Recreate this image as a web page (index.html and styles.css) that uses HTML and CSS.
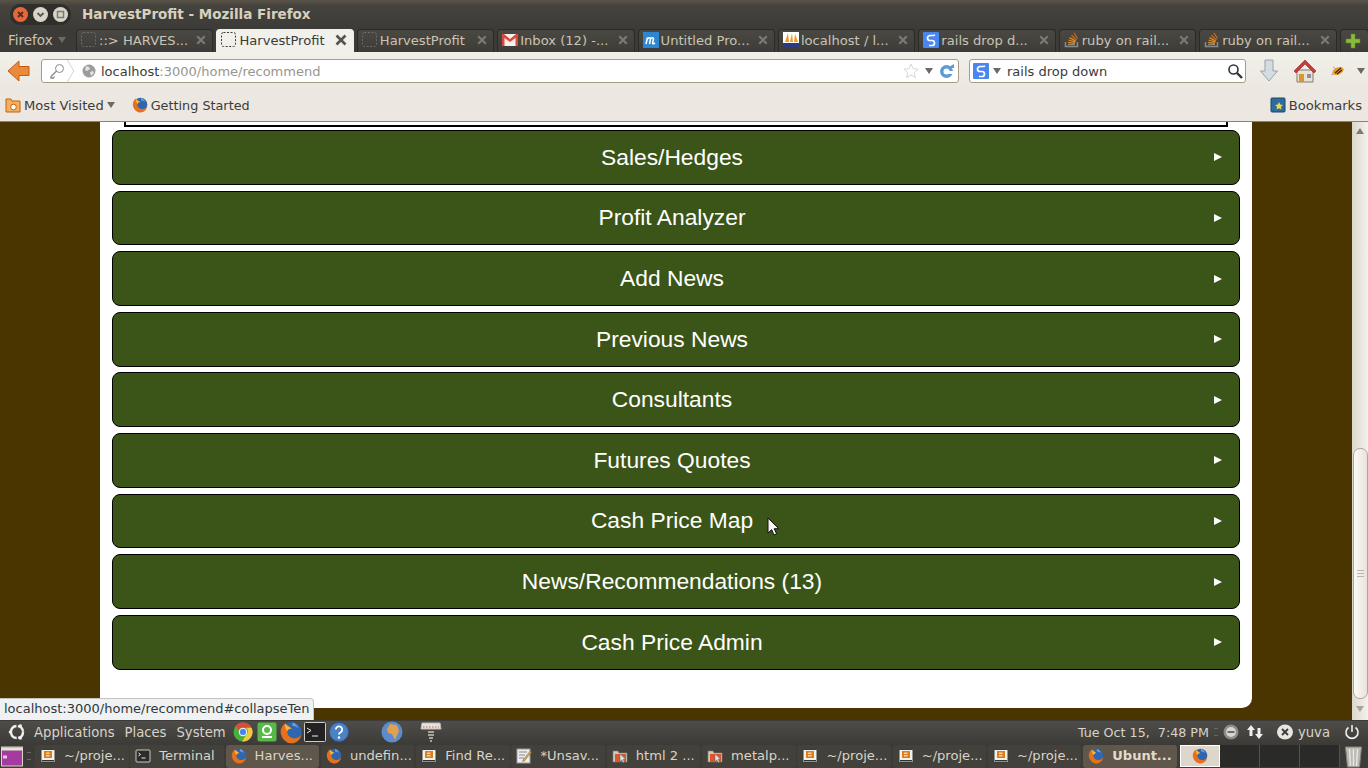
FILE: index.html
```html
<!DOCTYPE html>
<html lang="en">
<head>
    <meta charset="UTF-8">
    <title>HarvestProfit - Mozilla Firefox</title>
    <link rel="stylesheet" href="styles.css">
</head>
<body>

<svg class="defs" width="0" height="0">
    <symbol id="fx" viewBox="0 0 16 16">
        <circle cx="8.500" cy="7.500" r="6.800" fill="#2f66b0"/>
        <path d="M4 1.500C1 3.500.5 7 1 9c1 4 4 6.500 7.500 6.500s6.500-3 6.700-6.500c-.7 2-3.200 3.500-5.700 3-3-.5-4.500-3-4-5 .5-1.500 2-2 3-1.500C7 3.500 5 3.500 4 1.500z" fill="#e8701a"/>
        <path d="M4 1.500c1 2 3 2 4.500 4-1-.5-2.500 0-3 1.500C4 5.500 3.500 3.500 4 1.500z" fill="#f6b53a"/>
        <path d="M9 1c2 .5 3.500 2 4 4-1.500-1.500-3-1.500-4-1.500z" fill="#6fa0dc"/>
    </symbol>
    <symbol id="sublime" viewBox="0 0 16 16">
        <rect x="1" y="1.500" width="14" height="13" rx="1" fill="#f4f1ea" stroke="#3a3a36"/>
        <rect x="4" y="3" width="8" height="7" fill="#d8801e"/>
        <path d="M6 7.800h3.500M6 5.200h3.500" stroke="#fff" stroke-width="1"/>
        <rect x="2" y="12" width="12" height="1.500" fill="#333"/>
    </symbol>
    <symbol id="term" viewBox="0 0 16 16">
        <rect x="1" y="2" width="14" height="12" rx="1" fill="#2b2b2b" stroke="#cfcbc2"/>
        <path d="M3.500 5l2 1.500-2 1.500M6.500 10h4" stroke="#eee" fill="none"/>
    </symbol>
    <symbol id="folder" viewBox="0 0 16 16">
        <path d="M1 3h5l1 2h8v9H1z" fill="#cfc8b8" stroke="#8a8272" stroke-width=".6"/>
        <rect x="3" y="6" width="11" height="8" fill="#d9572b"/>
        <path d="M8 6l5.500 5-2.300.3 1.200 2.700-1.400.6-1.200-2.700L8 13.500z" fill="#d8e0e8" stroke="#555" stroke-width=".4"/>
    </symbol>
    <symbol id="blank" viewBox="0 0 16 16">
        <rect x=".5" y=".5" width="14" height="14" rx="2" fill="none" stroke="currentColor" stroke-dasharray="2 1.500"/>
    </symbol>
    <symbol id="google" viewBox="0 0 16 16">
        <rect width="16" height="16" rx="1" fill="#4a86f0"/>
        <path d="M10.500 3.500H7a2.500 2.500 0 0 0 0 5h2a2 2 0 0 1 0 5H6M10.500 3.500l1.500-.5" fill="none" stroke="#fff" stroke-width="1.700"/>
    </symbol>
    <symbol id="so" viewBox="0 0 16 16">
        <path d="M1.500 10v4.500h12V10" fill="none" stroke="#8c8a82" stroke-width="1.500"/>
        <path d="M4 12.500h7" stroke="#8c8a82" stroke-width="1.300"/>
        <path d="M4 10.300l7 1M4.500 8l6.800 2.200M5.500 5.600l6.300 3.500" stroke="#d88a24" stroke-width="1.300"/>
        <path d="M7.500 3.200l5 4.800M10 1l3.500 5.500" stroke="#d8641e" stroke-width="1.300"/>
    </symbol>
    <symbol id="close" viewBox="0 0 12 12">
        <path d="M1.500 1.500l9 9M10.500 1.500l-9 9" stroke="currentColor" stroke-width="2.600"/>
    </symbol>
    <symbol id="caret" viewBox="0 0 8 6">
        <path d="M0 0h8L4 6z" fill="currentColor"/>
    </symbol>
</svg>

<header class="titlebar">
    <div class="winbtns">
        <svg class="winbtn" viewBox="0 0 15 15"><circle cx="7.500" cy="7.500" r="7.500" fill="#e8663c"/><path d="M5 5l5 5M10 5l-5 5" stroke="#4a3028" stroke-width="1.800"/></svg>
        <svg class="winbtn" viewBox="0 0 15 15"><circle cx="7.500" cy="7.500" r="7.500" fill="#d8d4ca"/><path d="M4.500 6l3 3 3-3" fill="none" stroke="#5a5850" stroke-width="1.800"/></svg>
        <svg class="winbtn" viewBox="0 0 15 15"><circle cx="7.500" cy="7.500" r="7.500" fill="#d8d4ca"/><rect x="4.500" y="4.500" width="6" height="6" fill="none" stroke="#7c7a72" stroke-width="1.500"/></svg>
    </div>
    <span class="wintitle">HarvestProfit - Mozilla Firefox</span>
</header>

<div class="tabstrip">
    <span class="appmenu">Firefox <svg class="caret"><use href="#caret"/></svg></span>
    <div class="tab"><svg class="ico16 dim"><use href="#blank"/></svg><span class="tab-label">::&gt; HARVES...</span><svg class="tab-x"><use href="#close"/></svg></div>
    <div class="tab tab-active"><svg class="ico16"><use href="#blank"/></svg><span class="tab-label">HarvestProfit</span><svg class="tab-x"><use href="#close"/></svg></div>
    <div class="tab"><svg class="ico16 dim"><use href="#blank"/></svg><span class="tab-label">HarvestProfit</span><svg class="tab-x"><use href="#close"/></svg></div>
    <div class="tab">
        <svg class="ico16" viewBox="0 0 16 16"><rect y="2" width="16" height="12" fill="#f4f0ea"/><path d="M0 2v12h2.500V6L8 10l5.500-4v8H16V2h-2L8 7 2 2z" fill="#d94a3d"/></svg>
        <span class="tab-label">Inbox (12) -...</span><svg class="tab-x"><use href="#close"/></svg>
    </div>
    <div class="tab">
        <svg class="ico16" viewBox="0 0 16 16"><rect width="16" height="16" fill="#2d86d0"/><path d="M3 12l1.500-6.500M4.500 7c1-1.500 3-2 3 0l-1 5M7.500 7c1-1.500 3-2 3 0l-1 4c0 1 1 1 2.500 0" fill="none" stroke="#fff" stroke-width="1.600"/></svg>
        <span class="tab-label">Untitled Pro...</span><svg class="tab-x"><use href="#close"/></svg>
    </div>
    <div class="tab">
        <svg class="ico16" viewBox="0 0 16 16"><rect width="16" height="16" fill="#fff"/><path d="M2 10L5 1l1 9zM7 10l2-9 1 9zM11 10l1-8 3 8z" fill="#f29a1d"/><rect y="11" width="16" height="5" fill="#2c3a80"/></svg>
        <span class="tab-label">localhost / l...</span><svg class="tab-x"><use href="#close"/></svg>
    </div>
    <div class="tab"><svg class="ico16"><use href="#google"/></svg><span class="tab-label">rails drop d...</span><svg class="tab-x"><use href="#close"/></svg></div>
    <div class="tab"><svg class="ico16"><use href="#so"/></svg><span class="tab-label">ruby on rail...</span><svg class="tab-x"><use href="#close"/></svg></div>
    <div class="tab"><svg class="ico16"><use href="#so"/></svg><span class="tab-label">ruby on rail...</span><svg class="tab-x"><use href="#close"/></svg></div>
    <div class="tab tab-new">
        <svg class="ico16" viewBox="0 0 16 16"><path d="M6 1h4v5h5v4h-5v5H6v-5H1V6h5z" fill="#86bc3c" stroke="#5f8c24" stroke-width=".6"/></svg>
    </div>
</div>

<nav class="navbar">
    <svg class="back" viewBox="0 0 23 22"><path d="M1 11L12 1v5.500h10v9H12V21z" fill="#ec8a3c" stroke="#c25a14"/></svg>
    <div class="field urlbar">
        <svg class="ico16 key" viewBox="0 0 16 16"><circle cx="10.500" cy="5.500" r="4" fill="#fff" stroke="#8c8a84"/><path d="M7.500 8L2 13.500V15h2.500l1-1.500" fill="none" stroke="#8c8a84" stroke-width="1.300"/></svg>
        <svg class="chevron" viewBox="0 0 8 24"><path d="M0 0l7 12-7 12" fill="none" stroke="#d4d0c8"/></svg>
        <svg class="ico14" viewBox="0 0 14 14"><circle cx="7" cy="7" r="6.500" fill="#9c9c9c"/><path d="M4 2l3 1 1 2-3 2-2-1zM8 8l3-1 1 2-3 3z" fill="#e2e2e2"/></svg>
        <span class="url"><span class="url-host">localhost</span>:3000/home/recommend</span>
        <svg class="ico16 star" viewBox="0 0 16 16"><path d="M8 1l2.100 4.700 5 .5-3.800 3.300 1.100 5L8 11.900l-4.400 2.600 1.100-5L.9 6.200l5-.5z" fill="#fff" stroke="#d8d6d0"/></svg>
        <svg class="caret dark"><use href="#caret"/></svg>
        <svg class="ico16 reload" viewBox="0 0 16 16"><circle cx="7.500" cy="8.500" r="6.500" fill="#5d9bd8"/><circle cx="7.500" cy="8.500" r="3" fill="#fff"/><path d="M8 5h7V1z" fill="#5d9bd8"/><rect x="9" y="8" width="6" height="3" fill="#fff"/></svg>
    </div>
    <div class="field searchbar">
        <svg class="ico16"><use href="#google"/></svg>
        <svg class="caret dark"><use href="#caret"/></svg>
        <span class="search-text">rails drop down</span>
        <svg class="ico16 glass" viewBox="0 0 16 16"><circle cx="6.500" cy="6.500" r="4.500" fill="#fff" stroke="#333" stroke-width="1.600"/><path d="M10 10l5 5" stroke="#333" stroke-width="2.400"/></svg>
    </div>
    <svg class="tool-down" viewBox="0 0 18 24"><path d="M5 1h8v11h4.500L9 22 .5 12H5z" fill="#d4dce2" stroke="#9aa2a6"/></svg>
    <svg class="tool-home" viewBox="0 0 24 24"><path d="M4 11h16v12H4z" fill="#e8e2d6" stroke="#8a7a60"/><path d="M1 12L12 1l11 11-2 2-9-9-9 9z" fill="#c43c3c" stroke="#8e2626" stroke-width=".6"/><rect x="6" y="15" width="5" height="8" fill="#d8962c"/><rect x="14" y="15" width="4" height="4" fill="#8c9098"/></svg>
    <svg class="tool-bug" viewBox="0 0 16 14"><ellipse cx="8" cy="7" rx="6" ry="3.500" transform="rotate(-25 8 7)" fill="#e89a24"/><path d="M5 9l6-5M7 10l5-4" stroke="#3a2a16" stroke-width="1.200"/><path d="M1 11l4-2M3 3l3 2" stroke="#aaa69c"/></svg>
    <svg class="caret dark tool-caret"><use href="#caret"/></svg>
</nav>

<div class="bookmarks">
    <span class="bm">
        <svg class="ico16" viewBox="0 0 16 16"><path d="M1 2h5l1 2h8v11H1z" fill="#f0b060" stroke="#c8600c"/><circle cx="8.500" cy="10" r="2.800" fill="#fff" stroke="#c8600c"/></svg>
        Most Visited <svg class="caret dark"><use href="#caret"/></svg>
    </span>
    <span class="bm bm-start"><svg class="ico16"><use href="#fx"/></svg>Getting Started</span>
    <span class="bm bm-right">
        <svg class="ico16" viewBox="0 0 16 16"><rect x="1" y="1" width="14" height="14" rx="1" fill="#2e6c9c" stroke="#1c4468"/><path d="M9 5l1.200 2.600 2.800.3-2.100 1.900.6 2.800L9 11.200l-2.500 1.400.6-2.800L5 7.900l2.800-.3z" fill="#f6d648"/></svg>
        Bookmarks
    </span>
</div>

<div class="viewport">
    <main class="page">
        <div class="card">
            <div class="topbox"></div>
            <div class="accordion">
                <a class="acc-row"><span class="acc-title">Sales/Hedges</span><i class="acc-arrow"></i></a>
                <a class="acc-row"><span class="acc-title">Profit Analyzer</span><i class="acc-arrow"></i></a>
                <a class="acc-row"><span class="acc-title">Add News</span><i class="acc-arrow"></i></a>
                <a class="acc-row"><span class="acc-title">Previous News</span><i class="acc-arrow"></i></a>
                <a class="acc-row"><span class="acc-title">Consultants</span><i class="acc-arrow"></i></a>
                <a class="acc-row"><span class="acc-title">Futures Quotes</span><i class="acc-arrow"></i></a>
                <a class="acc-row"><span class="acc-title">Cash Price Map</span><i class="acc-arrow"></i></a>
                <a class="acc-row"><span class="acc-title">News/Recommendations (13)</span><i class="acc-arrow"></i></a>
                <a class="acc-row"><span class="acc-title">Cash Price Admin</span><i class="acc-arrow"></i></a>
            </div>
        </div>
    </main>
    <div class="scrollbar">
        <span class="sb-up"></span>
        <div class="sb-thumb"><span class="sb-grip"></span></div>
        <span class="sb-down"></span>
    </div>
    <div class="statuspanel">localhost:3000/home/recommend#collapseTen</div>
    <svg class="pointer" viewBox="0 0 12 19"><path d="M1 1v15l3.600-3.400L7 18l2.600-1.200-2.400-5.100h4.600z" fill="#f6f6f6" stroke="#111" stroke-width="1"/></svg>
</div>

<div class="gnome-top">
    <svg class="ubuntu" viewBox="0 0 18 18"><circle cx="9" cy="9" r="6" fill="none" stroke="#eee" stroke-width="2.400" stroke-dasharray="8 1.500"/><circle cx="2.500" cy="9" r="1.800" fill="#eee"/><circle cx="12.300" cy="3" r="1.800" fill="#eee"/><circle cx="12.300" cy="15" r="1.800" fill="#eee"/></svg>
    <span class="menu">Applications</span>
    <span class="menu">Places</span>
    <span class="menu">System</span>
    <div class="launchers">
        <svg class="launch" viewBox="0 0 20 20"><circle cx="10" cy="10" r="9.500" fill="#4caf3c"/><path d="M10 .5a9.500 9.500 0 0 1 8.500 5.300H10a4.200 4.200 0 0 0-4 3L2.500 4A9.500 9.500 0 0 1 10 .5z" fill="#dd4a3c"/><path d="M18.500 5.800A9.500 9.500 0 0 1 9 19.500l4.500-7a4.200 4.200 0 0 0-.5-6.700z" fill="#f6c83c"/><circle cx="10" cy="10" r="3.800" fill="#4a86e8" stroke="#fff"/></svg>
        <svg class="launch launch-cheese" viewBox="0 0 20 20"><rect x=".5" y=".5" width="19" height="19" rx="2" fill="#58b948"/><circle cx="10" cy="8" r="4" fill="none" stroke="#fff" stroke-width="2"/><path d="M5 15h10" stroke="#fff" stroke-width="2"/></svg>
        <svg class="launch launch-fox"><use href="#fx"/></svg>
        <svg class="launch launch-term" viewBox="0 0 22 20"><rect x=".5" y=".5" width="21" height="19" rx="1" fill="#222" stroke="#cfcbc2"/><path d="M3 6l4 2.500-4 2.500M8 14h6" stroke="#eee" fill="none"/></svg>
        <svg class="launch launch-help" viewBox="0 0 20 20"><circle cx="10" cy="10" r="9.500" fill="#4c82c4" stroke="#2d5c98"/><path d="M6.800 7.500a3.200 3.200 0 1 1 4.800 2.800c-1 .6-1.600 1-1.600 2.200" fill="none" stroke="#fff" stroke-width="1.800"/><circle cx="10" cy="15.500" r="1.200" fill="#fff"/></svg>
        <svg class="launch launch-globe" viewBox="0 0 22 22"><circle cx="11" cy="11" r="10.500" fill="#5c8ccc"/><path d="M9 3l7 1 2 6-4 9-3-6-4-1-1-4z" fill="#e0a050"/></svg>
        <svg class="launch launch-net" viewBox="0 0 22 22"><path d="M2 2h18l1 6H1z" fill="#e8e4dc" stroke="#bbb"/><path d="M3 6h16" stroke="#c85a4a" stroke-dasharray="1.500 1.500"/><path d="M8 11h6M8 14h6M9 17h4M10 20h2" stroke="#c8c4ba" stroke-width="1.300"/></svg>
    </div>
    <div class="tray">
        <span class="clock">Tue Oct 15,&nbsp; 7:48 PM</span>
        <span class="handle"></span>
        <svg class="tray-ico tray-busy" viewBox="0 0 16 16"><circle cx="8" cy="8" r="7.500" fill="#8e8c86"/><circle cx="8" cy="8" r="5" fill="#d8d6d0"/><rect x="4.500" y="7" width="7" height="2" fill="#6c6a64"/></svg>
        <svg class="tray-ico tray-net" viewBox="0 0 18 16"><path d="M5 1l4 5H6.500v6h-3V6H1zM13 15l4-5h-2.500V4h-3v6H9z" fill="#eee"/></svg>
        <svg class="tray-ico tray-user" viewBox="0 0 18 16"><ellipse cx="9" cy="8" rx="8" ry="7.500" fill="#e8e6e0"/><path d="M6 5l6 6M12 5l-6 6" stroke="#3c3b37" stroke-width="1.800"/></svg>
        <span class="username">yuva</span>
        <svg class="tray-ico tray-power" viewBox="0 0 16 16"><path d="M4.500 3.500a6 6 0 1 0 7 0" fill="none" stroke="#eee" stroke-width="1.600"/><path d="M8 1v7" stroke="#eee" stroke-width="1.600"/></svg>
    </div>
</div>

<div class="gnome-bottom">
    <svg class="desk" viewBox="0 0 22 20"><rect x=".5" y=".5" width="21" height="19" fill="#a53ba0" stroke="#d8d4ca"/><rect x="1" y="1" width="20" height="3" fill="#e8e4d8"/><rect x="2" y="9" width="4" height="3" fill="#e8c8e8"/></svg>
    <span class="handle handle-win"></span>
    <div class="winlist">
        <div class="win"><svg class="ico16"><use href="#sublime"/></svg>~/proje...</div>
        <div class="win"><svg class="ico16"><use href="#term"/></svg>Terminal</div>
        <div class="win win-on"><svg class="ico16"><use href="#fx"/></svg>Harves...</div>
        <div class="win"><svg class="ico16"><use href="#fx"/></svg>undefin...</div>
        <div class="win"><svg class="ico16"><use href="#sublime"/></svg>Find Re...</div>
        <div class="win">
            <svg class="ico16" viewBox="0 0 16 16"><rect x="1" y="1" width="13" height="14" fill="#eee" stroke="#999"/><path d="M3 4h8M3 7h6M3 10h5" stroke="#888"/><path d="M7 12l7-9 1.500 1-7 9-2 .5z" fill="#d8a848" stroke="#555" stroke-width=".4"/></svg>
            *Unsav...
        </div>
        <div class="win"><svg class="ico16"><use href="#folder"/></svg>html 2 ...</div>
        <div class="win"><svg class="ico16"><use href="#folder"/></svg>metalp...</div>
        <div class="win"><svg class="ico16"><use href="#sublime"/></svg>~/proje...</div>
        <div class="win"><svg class="ico16"><use href="#sublime"/></svg>~/proje...</div>
        <div class="win"><svg class="ico16"><use href="#sublime"/></svg>~/proje...</div>
        <div class="win win-on win-bold"><svg class="ico16"><use href="#fx"/></svg>Ubunt...</div>
    </div>
    <div class="pager">
        <div class="ws ws-on"><svg class="ico16"><use href="#fx"/></svg></div>
        <div class="ws"></div>
        <div class="ws"></div>
        <div class="ws"></div>
    </div>
    <svg class="trash" viewBox="0 0 20 24"><path d="M2 3h16l-2 20H4z" fill="#bcbab4" stroke="#85837d"/><path d="M6 5l1 17M10 5v17M14 5l-1 17" stroke="#e8e6e0" stroke-width="1.400"/></svg>
</div>

</body>
</html>
```

FILE: styles.css
```css
* {
    box-sizing: border-box;
}
html, body {
    margin: 0;
    height: 768px;
    overflow: hidden;
}
body {
    display: flex;
    flex-direction: column;
    font-family: "DejaVu Sans", sans-serif;
    font-size: 13px;
    background: #3c3b37;
}
svg {
    display: block;
    flex: none;
}
.defs {
    position: absolute;
}
.ico16 {
    width: 16px;
    height: 16px;
}
.ico14 {
    width: 14px;
    height: 14px;
}
.caret {
    display: inline-block;
    width: 8px;
    height: 6px;
    color: #6d6a62;
}
.caret.dark {
    color: #6b6a64;
}

/* window title */
.titlebar {
    height: 29px;
    flex: none;
    display: flex;
    align-items: center;
    padding: 0 0 1px 10px;
    background: linear-gradient(#5a5448, #45433d 20%, #3c3b37);
}
.winbtns {
    display: flex;
    gap: 5px;
    align-items: center;
    padding: 3px 3px;
    background: #2f2e2b;
    border-radius: 10px;
}
.winbtn {
    width: 15px;
    height: 15px;
}
.wintitle {
    margin-left: 11px;
    font-weight: bold;
    font-size: 13.500px;
    color: #d8d0bf;
}

/* tabs */
.tabstrip {
    height: 23px;
    flex: none;
    display: flex;
    align-items: flex-end;
    gap: 3px;
    background: #3c3b37;
}
.appmenu {
    flex: none;
    width: 73px;
    padding: 0 0 2px 8px;
    height: 23px;
    display: flex;
    align-items: center;
    gap: 5px;
    font-size: 13.500px;
    color: #c9c4b6;
}
.tab {
    flex: none;
    width: 137.400px;
    height: 23px;
    display: flex;
    align-items: center;
    padding: 0 6px 2px 4px;
    gap: 2px;
    background: linear-gradient(#4a4843, #3d3c38);
    border: 1px solid #2b2a27;
    border-bottom: none;
    border-radius: 4px 4px 0 0;
    font-size: 13.100px;
    color: #c9c4b6;
    white-space: nowrap;
}
.tab-active {
    background: #f2f0ea;
    color: #3c3b37;
    border-color: #f2f0ea;
}
.tab-label {
    flex: 1;
    min-width: 0;
}
.tab-x {
    width: 10px;
    height: 10px;
    color: #7b7a74;
}
.tab-active .tab-x {
    width: 12px;
    height: 12px;
    color: #55534e;
}
.dim {
    color: #6e6c66;
}
.tab-new {
    width: 29px;
    padding: 0 4px;
}

/* navigation */
.navbar {
    height: 36px;
    flex: none;
    display: flex;
    align-items: center;
    padding: 2px 0 0 7px;
    background: linear-gradient(#f2f0ea, #ece8e1);
    color: #3c3b37;
}
.back {
    width: 23px;
    height: 22px;
}
.field {
    flex: none;
    height: 24px;
    display: flex;
    align-items: center;
    background: #fff;
    border: 1px solid #a89c84;
    border-radius: 3px;
}
.urlbar {
    width: 918px;
    margin-left: 11px;
    padding-left: 7px;
}
.chevron {
    width: 8px;
    height: 22px;
    margin: 0 7px 0 2px;
}
.url {
    flex: 1;
    margin-left: 5px;
    color: #97958f;
}
.url-host {
    color: #3c3b37;
}
.star {
    margin-right: 6px;
}
.reload {
    margin: 0 3px 0 6px;
}
.searchbar {
    width: 277px;
    margin-left: 10px;
    padding: 0 2px 0 3px;
}
.search-text {
    flex: 1;
    margin-left: 6px;
}
.searchbar .caret {
    margin-left: 4px;
}
.tool-down {
    width: 18px;
    height: 24px;
    margin-left: 14px;
}
.tool-home {
    width: 24px;
    height: 24px;
    margin-left: 15px;
}
.tool-bug {
    width: 16px;
    height: 14px;
    margin-left: 13px;
}
.tool-caret {
    margin-left: 11px;
}

/* bookmarks */
.bookmarks {
    height: 34px;
    flex: none;
    display: flex;
    align-items: center;
    padding: 1px 6px 0 5px;
    gap: 18px;
    background: #ece8e1;
    border-bottom: 1px solid #8a8272;
    font-size: 13.100px;
    color: #3c3b37;
}
.bm {
    display: flex;
    align-items: center;
    gap: 3px;
}
.bm-start {
    margin-left: -1px;
    font-size: 12.800px;
}
.bm-right {
    margin-left: auto;
}

/* page content */
.viewport {
    position: relative;
    height: 598px;
    flex: none;
    display: flex;
    background: #4a3500;
}
.page {
    flex: 1;
    padding-left: 100px;
}
.card {
    width: 1152px;
    height: 586px;
    padding: 0 12px;
    background: #fff;
    border-radius: 0 0 10px 10px;
}
.topbox {
    height: 5px;
    margin: 0 12px 3px;
    border: 2px solid #000;
    border-top: none;
}
.accordion {
    display: flex;
    flex-direction: column;
    gap: 5.800px;
}
.acc-row {
    height: 54.800px;
    display: flex;
    align-items: center;
    padding: 0 17px;
    background: #3b5518;
    border: 1px solid #000;
    border-radius: 8px;
    color: #fff;
    font-family: "Liberation Sans", Arial, sans-serif;
    font-size: 22.800px;
}
.acc-title {
    flex: 1;
    text-align: center;
}
.acc-arrow {
    width: 0;
    height: 0;
    border-left: 8px solid #fff;
    border-top: 4px solid transparent;
    border-bottom: 4px solid transparent;
}

/* scrollbar */
.scrollbar {
    width: 16px;
    flex: none;
    display: flex;
    flex-direction: column;
    align-items: center;
    padding-top: 6px;
    background: linear-gradient(90deg, #dcd6cc, #f4f2ee);
}
.sb-up,
.sb-down {
    width: 0;
    height: 0;
    border-left: 4px solid transparent;
    border-right: 4px solid transparent;
}
.sb-up {
    border-bottom: 6px solid #807c72;
}
.sb-down {
    margin-top: 7px;
    border-top: 6px solid #a8a498;
}
.sb-thumb {
    width: 15px;
    height: 251px;
    margin-top: 314px;
    display: flex;
    align-items: center;
    justify-content: center;
    background: linear-gradient(90deg, #fbfaf8, #e8e3da);
    border: 1px solid #b0a690;
    border-radius: 7px;
}
.sb-grip {
    width: 7px;
    height: 7px;
    border-top: 1px solid #bdb6a6;
    border-bottom: 1px solid #bdb6a6;
    background: linear-gradient(transparent 45%, #bdb6a6 45%, #bdb6a6 65%, transparent 65%);
}

/* things over the page */
.statuspanel {
    position: absolute;
    left: 0;
    bottom: 0;
    height: 22px;
    width: 314px;
    padding: 2px 0 0 4px;
    background: #eff1f2;
    border: 1px solid #c4c4c0;
    border-left: none;
    border-bottom: none;
    border-radius: 0 4px 0 0;
    font-size: 13px;
    color: #30383c;
    white-space: nowrap;
}
.pointer {
    position: absolute;
    left: 767px;
    top: 395px;
    width: 12px;
    height: 19px;
}

/* gnome panels */
.gnome-top {
    height: 24px;
    flex: none;
    display: flex;
    align-items: center;
    padding: 0 0 1px 8px;
    background: linear-gradient(#4e4d49, #3c3b37);
    font-size: 13.200px;
    color: #d8d4c8;
    border-top: 1px solid #3c3b37;
}
.ubuntu {
    width: 18px;
    height: 18px;
    margin-right: 8px;
}
.menu {
    margin-right: 10px;
}
.launchers {
    display: flex;
    align-items: center;
    margin-left: -3px;
}
.launch {
    width: 20px;
    height: 20px;
}
.launch-cheese {
    margin-left: 4px;
}
.launch-fox {
    width: 24px;
    height: 23px;
    margin-left: 2px;
}
.launch-term {
    width: 22px;
    margin-left: 1px;
}
.launch-help {
    margin-left: 3px;
}
.launch-globe {
    width: 22px;
    height: 22px;
    margin-left: 32px;
}
.launch-net {
    width: 24px;
    height: 22px;
    margin-left: 16px;
}
.tray {
    margin-left: auto;
    display: flex;
    align-items: center;
}
.clock {
    margin-right: 5px;
    font-size: 12.700px;
}
.handle {
    width: 4px;
    height: 8px;
    border-top: 1px solid #6a6964;
    border-bottom: 1px solid #6a6964;
    margin-right: 5px;
}
.tray-ico {
    width: 16px;
    height: 16px;
    margin-right: 8px;
}
.tray-busy {
    margin-right: 7px;
}
.tray-net {
    width: 18px;
    margin-right: 12px;
}
.tray-user {
    width: 18px;
    margin-right: 4px;
}
.username {
    margin-right: 14px;
}
.gnome-bottom {
    height: 24px;
    flex: none;
    display: flex;
    align-items: center;
    background: #3c3b37;
    color: #d8d4c8;
}
.desk {
    width: 22px;
    height: 21px;
    margin-left: 1px;
}
.handle-win {
    margin: 0 4px;
}
.winlist {
    display: flex;
    gap: 1.800px;
}
.win {
    flex: none;
    width: 93.500px;
    height: 23px;
    display: flex;
    align-items: center;
    gap: 8px;
    padding: 0 0 1px 5px;
    border-radius: 3px;
    background: #42413c;
    font-size: 13.100px;
    white-space: nowrap;
}
.win-on {
    background: #5f574b;
}
.win-bold {
    font-weight: bold;
    font-size: 13px;
    color: #e2dccd;
}
.pager {
    display: flex;
    margin-left: 3px;
}
.ws {
    width: 40px;
    height: 22px;
    background: #2a2a28;
    border-right: 1px solid #55534d;
}
.ws-on {
    display: flex;
    align-items: center;
    justify-content: center;
    background: #ddd6cb;
    border: 1px solid #fff;
}
.trash {
    width: 21px;
    height: 24px;
    margin-left: 3px;
}
```
